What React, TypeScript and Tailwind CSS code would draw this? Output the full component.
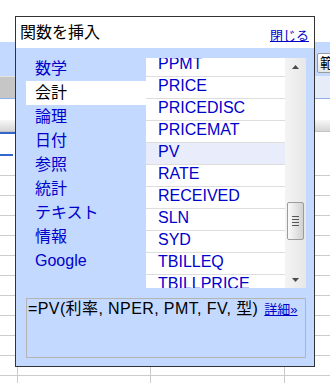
const funcs = [
  "PPMT",
  "PRICE",
  "PRICEDISC",
  "PRICEMAT",
  "PV",
  "RATE",
  "RECEIVED",
  "SLN",
  "SYD",
  "TBILLEQ",
  "TBILLPRICE",
];
const cats = ["数学", "会計", "論理", "日付", "参照", "統計", "テキスト", "情報", "Google"];

function GridRow({ last }: { last?: boolean }) {
  return (
    <div className={last ? "flex h-[7px]" : "flex h-[20px] border-b border-[#cccccc]"}>
      <div className="w-[18px] shrink-0 border-r border-[#cccccc]" />
      <div className="w-[133px] shrink-0 border-r border-[#cccccc]" />
      <div className="w-[134px] shrink-0 border-r border-[#cccccc]" />
    </div>
  );
}

export default function App() {
  return (
    <div className="relative w-[330px] h-[383px] overflow-hidden bg-white font-['Liberation_Sans','Noto_Sans_CJK_JP',sans-serif]">
      {/* spreadsheet behind */}
      <div className="h-[42px] bg-white" />
      <div className="h-[34px] bg-[#c3d9ff] flex pl-[317px] pt-[11px]">
        <div className="shrink-0 w-[50px] h-[20px] border border-[#9a9a9a] rounded-[2px] bg-gradient-to-b from-[#ffffff] to-[#e4e4e4] pl-[2px] text-[14px] leading-[18px] text-black">
          範囲
        </div>
      </div>
      <div className="h-[23px] flex border-b border-[#8fb0ea]">
        <div className="w-[165px] bg-[#c6c6c6] border-t border-[#e4e4e4]" />
        <div className="flex-1 bg-[#e6edf9]" />
      </div>
      <div className="h-[21px]" />
      <div className="h-[12px] bg-gradient-to-b from-[#f7f7f7] to-[#d6d6d6] border-b border-[#c4c4c4]" />
      <div className="h-[2px] flex">
        <div className="w-[160px] bg-[#3366cc]" />
      </div>
      <div className="h-[20px]" />
      <div className="h-[2px] w-[13px] bg-[#3366cc]" />
      {Array.from({ length: 11 }).map((_, i) => (
        <GridRow key={i} />
      ))}
      <GridRow last />

      {/* dialog */}
      <div className="absolute left-[15px] top-[16px] w-[300px] h-[351px] border border-[#333333] flex flex-col">
        <div className="h-[31px] shrink-0 bg-white flex justify-between pl-[4px] pr-[5px]">
          <div className="pt-[6px] text-[16px] leading-[16px] text-black font-['Noto_Sans_CJK_JP',sans-serif]">
            関数を挿入
          </div>
          <a className="pt-[12px] text-[13px] leading-[13px] text-[#0000cc] underline cursor-pointer">
            閉じる
          </a>
        </div>
        <div className="flex-1 bg-[#c3d9ff] pt-[9px] pl-[10px] pr-[8px]">
          <div className="flex">
            <div className="w-[120px] shrink-0">
              {cats.map((c) => (
                <div
                  key={c}
                  className={
                    c === "会計"
                      ? "h-[24px] bg-white pl-[9px] text-[16px] leading-[24px] text-black"
                      : "h-[24px] pl-[9px] text-[16px] leading-[24px] text-[#0000cc]"
                  }
                >
                  {c}
                </div>
              ))}
            </div>
            <div className="mt-[1px] h-[230px] w-[160px] shrink-0 flex">
              <div className="w-[139px] h-full bg-white overflow-hidden">
                <div className="-mt-[3px]">
                  {funcs.map((f) => (
                    <div
                      key={f}
                      className={
                        f === "PV"
                          ? "h-[22px] border-b border-[#dddddd] bg-[#e9edfb] pl-[12px] text-[16px] leading-[17px] text-[#0000cc]"
                          : "h-[22px] border-b border-[#dddddd] pl-[12px] text-[16px] leading-[17px] text-[#0000cc]"
                      }
                    >
                      {f}
                    </div>
                  ))}
                </div>
              </div>
              <div className="w-[21px] h-full flex flex-col bg-gradient-to-r from-[#f4f4f4] to-[#e7e7e7]">
                <div className="h-[17px] flex items-center justify-center">
                  <svg width="7" height="4" viewBox="0 0 7 4">
                    <polygon points="3.5,0 7,4 0,4" fill="#4a4a4a" />
                  </svg>
                </div>
                <div className="flex-1">
                  <div className="mt-[127px] ml-[2px] w-[17px] h-[38px] rounded-[2px] border border-[#9c9c9c] bg-gradient-to-r from-[#fafafa] to-[#d2d2d2] flex flex-col items-center justify-center gap-[2px]">
                    <div className="w-[7px] h-[1px] bg-[#555555]" />
                    <div className="w-[7px] h-[1px] bg-[#555555]" />
                    <div className="w-[7px] h-[1px] bg-[#555555]" />
                    <div className="w-[7px] h-[1px] bg-[#555555]" />
                  </div>
                </div>
                <div className="h-[17px] flex items-center justify-center">
                  <svg width="7" height="4" viewBox="0 0 7 4">
                    <polygon points="0,0 7,0 3.5,4" fill="#4a4a4a" />
                  </svg>
                </div>
              </div>
            </div>
          </div>
          <div className="mt-[10px] h-[60px] w-[280px] border border-[#b4b4b4] pl-[1px] pt-[1px] whitespace-nowrap text-[16px] leading-[18px] tracking-[0.4px] text-black">
            =PV(利率, NPER, PMT, FV, 型)
            <a className="ml-[6px] text-[13px] tracking-normal text-[#0000cc] underline cursor-pointer">詳細»</a>
          </div>
        </div>
      </div>
    </div>
  );
}
